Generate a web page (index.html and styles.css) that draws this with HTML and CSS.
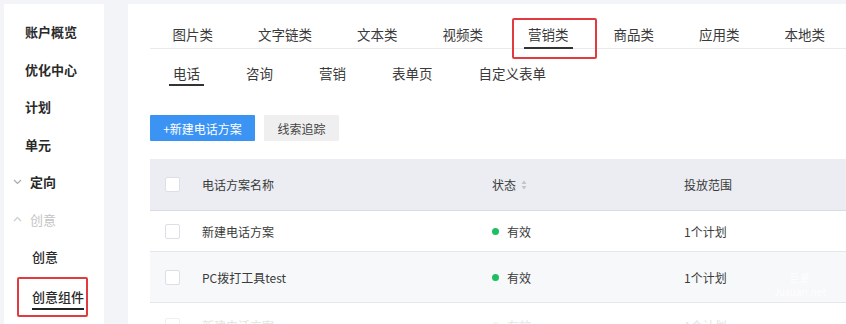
FILE: index.html
```html
<!DOCTYPE html>
<html lang="zh">
<head>
<meta charset="utf-8">
<link rel="stylesheet" href="styles.css">
</head>
<body>
<div class="page">
  <aside class="sidebar">
    <div class="nav-item">账户概览</div>
    <div class="nav-item">优化中心</div>
    <div class="nav-item">计划</div>
    <div class="nav-item">单元</div>
    <div class="nav-item group"><svg class="chev" width="9" height="6" viewBox="0 0 9 6"><path d="M1 1l3.5 3.5L8 1" fill="none" stroke="#aaa" stroke-width="1.2"/></svg>定向</div>
    <div class="nav-item group muted"><svg class="chev" width="9" height="6" viewBox="0 0 9 6"><path d="M1 5l3.5-3.5L8 5" fill="none" stroke="#ccc" stroke-width="1.2"/></svg>创意</div>
    <div class="nav-item sub">创意</div>
    <div class="nav-item sub boxed"><span class="uline">创意组件</span></div>
  </aside>
  <main class="main">
    <div class="tabs">
      <div class="tab">图片类</div>
      <div class="tab">文字链类</div>
      <div class="tab">文本类</div>
      <div class="tab">视频类</div>
      <div class="tab active">营销类<span class="redbox"></span></div>
      <div class="tab">商品类</div>
      <div class="tab">应用类</div>
      <div class="tab">本地类</div>
    </div>
    <div class="subtabs">
      <div class="subtab active"><span>电话</span></div>
      <div class="subtab"><span>咨询</span></div>
      <div class="subtab"><span>营销</span></div>
      <div class="subtab"><span>表单页</span></div>
      <div class="subtab"><span>自定义表单</span></div>
    </div>
    <div class="actions">
      <button class="btn primary">+新建电话方案</button>
      <button class="btn plain">线索追踪</button>
    </div>
    <div class="table">
      <div class="row head">
        <div class="cell"><span class="check"></span></div>
        <div class="cell">电话方案名称</div>
        <div class="cell">状态<svg class="sort" width="6" height="10" viewBox="0 0 6 10"><path d="M3 0.5L5.5 4H0.5z M3 9.5L5.5 6H0.5z" fill="#c0c4cc"/></svg></div>
        <div class="cell">投放范围</div>
      </div>
      <div class="row r1">
        <div class="cell"><span class="check"></span></div>
        <div class="cell">新建电话方案</div>
        <div class="cell"><span class="dot"></span>有效</div>
        <div class="cell">1个计划</div>
      </div>
      <div class="row r2">
        <div class="cell"><span class="check"></span></div>
        <div class="cell">PC拨打工具test</div>
        <div class="cell"><span class="dot"></span>有效</div>
        <div class="cell">1个计划</div>
        <div class="watermark"><div>巨量</div><div>Juxuan.net</div></div>
      </div>
      <div class="row r3">
        <div class="cell"><span class="check"></span></div>
        <div class="cell">新建电话方案</div>
        <div class="cell"><span class="dot"></span>有效</div>
        <div class="cell">1个计划</div>
      </div>
    </div>
  </main>
</div>
</body>
</html>
```

FILE: styles.css
```css
* { box-sizing: border-box; }
html, body { margin: 0; padding: 0; }
body {
  background: #f3f4f7;
  font-family: "Noto Sans CJK SC", "Noto Sans", sans-serif;
  color: #333;
  width: 846px;
  height: 324px;
  overflow: hidden;
}
.page {
  display: flex;
  gap: 24px;
  padding: 4px 0 0 4px;
  height: 324px;
}
.sidebar {
  width: 100px;
  flex: none;
  background: #fff;
  padding-top: 9px;
}
.nav-item {
  height: 37.5px;
  line-height: 37.5px;
  padding-left: 21px;
  font-size: 13px;
  font-weight: 700;
  color: #2a2a2a;
  display: flex;
  align-items: center;
}
.nav-item.group { padding-left: 9px; }
.nav-item .chev { margin-right: 8px; }
.nav-item.muted { color: #c4c4c4; font-weight: 400; }
.nav-item.sub { padding-left: 28px; font-weight: 500; }
.nav-item.boxed {
  margin: 1px 0 0 13px;
  width: 71px;
  height: 40px;
  padding-left: 13px;
  border: 2px solid #e23b3f;
  border-radius: 2px;
  line-height: 20px;
}
.uline {
  display: inline-block;
  border-bottom: 2px solid #222;
  padding-bottom: 1px;
  margin-top: 4px;
}
.main {
  flex: 1;
  background: #fff;
  padding-left: 22px;
  min-width: 0;
}
.tabs {
  display: flex;
  height: 45px;
  border-bottom: 1px solid #e9eaec;
}
.tab {
  position: relative;
  padding: 0 22.5px;
  font-size: 13.5px;
  line-height: 20px;
  padding-top: 20px;
  white-space: nowrap;
  color: #3a3a3a;
}
.tab.active::after {
  content: "";
  position: absolute;
  left: 18.5px;
  right: 18.5px;
  bottom: -1px;
  height: 2px;
  background: #333;
}
.redbox {
  position: absolute;
  left: 6.5px;
  top: 14px;
  width: 85px;
  height: 41px;
  border: 2px solid #e23b3f;
  border-radius: 2px;
}
.subtabs {
  display: flex;
  padding-top: 14px;
}
.subtab {
  padding: 0 19px;
  font-size: 13.5px;
  line-height: 20px;
  white-space: nowrap;
  color: #3a3a3a;
}
.subtab span {
  display: inline-block;
  padding: 0 4px 1px;
  border-bottom: 2px solid transparent;
}
.subtab.active span { border-bottom-color: #333; }
.actions {
  display: flex;
  gap: 9px;
  margin-top: 29px;
}
.btn {
  height: 26px;
  border: 0;
  border-radius: 1px;
  font-family: inherit;
  font-size: 12px;
  padding: 0;
  cursor: pointer;
}
.btn.primary { width: 105px; background: #3b94f4; color: #fff; }
.btn.plain { width: 75px; background: #efefef; color: #444; }
.table { margin-top: 18px; }
.row {
  position: relative;
  display: grid;
  grid-template-columns: 52px 290px 192px 1fr;
  align-items: center;
  border-bottom: 1px solid #e5e7eb;
  font-size: 12px;
  color: #3a3a3a;
}
.row.head { height: 52px; background: #ebedf2; border-bottom-color: #d9dce3; }
.row.r1 { height: 41px; background: #fff; }
.row.r2 { height: 51px; background: #f7f8fa; }
.row.r3 { height: 46px; background: #fff; color: #e4e4e4; }
.cell { display: flex; align-items: center; white-space: nowrap; }
.cell:first-child { padding-left: 15px; }
.check {
  width: 15px;
  height: 15px;
  background: #fff;
  border: 1px solid #dcdfe6;
  border-radius: 2px;
}
.r3 .check { border-color: #f0f0f0; }
.sort { margin-left: 5px; }
.dot {
  width: 7px;
  height: 7px;
  border-radius: 50%;
  background: #1dbf62;
  margin-right: 8px;
}
.r3 .dot { background: #eef8f2; }
.watermark {
  position: absolute;
  right: 20px;
  top: 19px;
  font-size: 10px;
  line-height: 14px;
  color: rgba(255,255,255,0.9);
  text-align: center;
}
```
